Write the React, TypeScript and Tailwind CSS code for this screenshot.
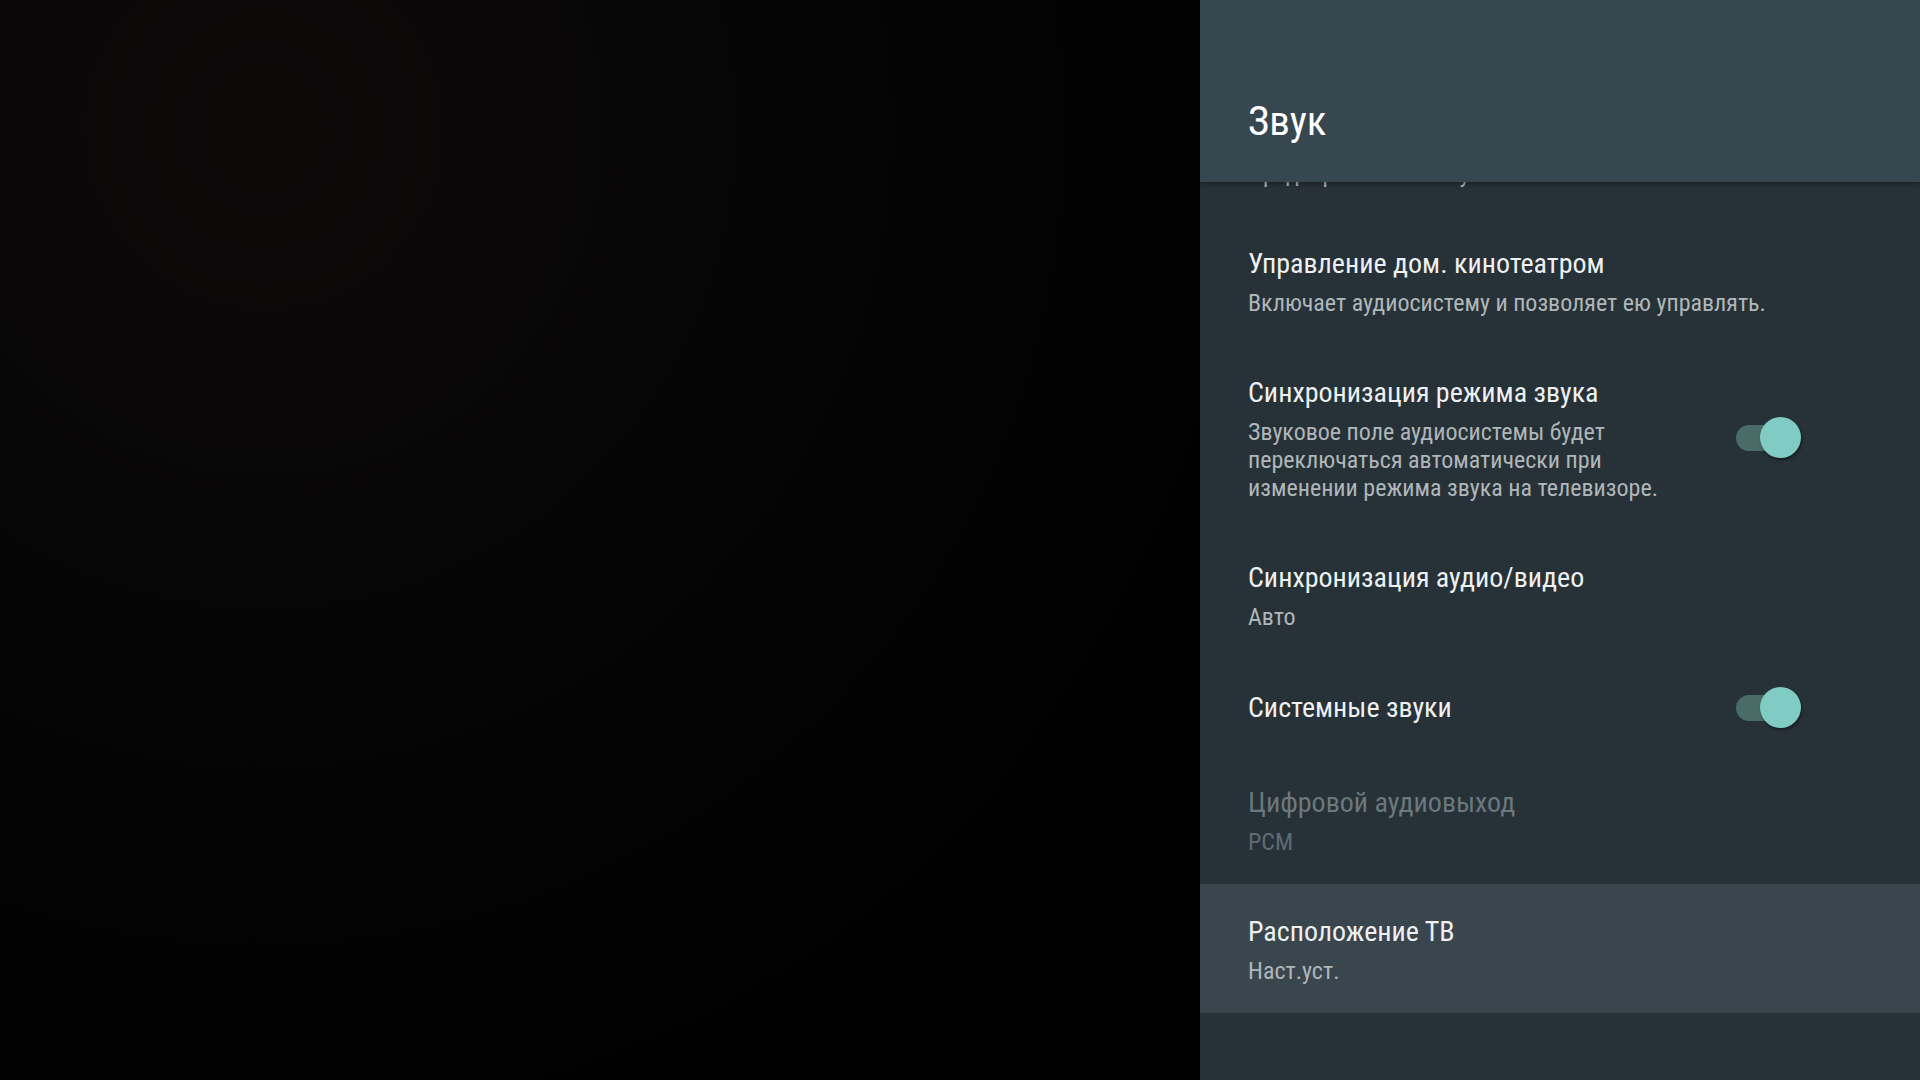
const font = { fontFamily: "Roboto, 'Noto Sans', sans-serif" };

type Row = {
  title: string;
  lines?: string[];
  toggle?: boolean;
  disabled?: boolean;
  focused?: boolean;
};

const rows: Row[] = [
  { title: "Звуковой режим", lines: ["Предварительный звук"] },
  { title: "Управление дом. кинотеатром", lines: ["Включает аудиосистему и позволяет ею управлять."] },
  {
    title: "Синхронизация режима звука",
    lines: [
      "Звуковое поле аудиосистемы будет",
      "переключаться автоматически при",
      "изменении режима звука на телевизоре.",
    ],
    toggle: true,
  },
  { title: "Синхронизация аудио/видео", lines: ["Авто"] },
  { title: "Системные звуки", toggle: true },
  { title: "Цифровой аудиовыход", lines: ["PCM"], disabled: true },
  { title: "Расположение ТВ", lines: ["Наст.уст."], focused: true },
];

function Toggle() {
  return (
    <div className="relative mr-[119px] h-[41px] w-[65px] shrink-0">
      <div className="absolute left-0 top-[8px] h-[26px] w-[54px] rounded-full bg-[#4a6c69]" />
      <div className="absolute right-0 top-0 h-[41px] w-[41px] rounded-full bg-[#80cbc4] shadow-[1px_2px_3px_rgba(0,0,0,0.45)]" />
    </div>
  );
}

function SettingRow({ row }: { row: Row }) {
  const titleColor = row.disabled ? "text-[#6b787e]" : "text-[#eef0f1]";
  const subColor = row.disabled ? "text-[#5f6c72]" : "text-[#b0b6b9]";
  return (
    <div
      className={`flex items-center pl-[48px] pt-[28px] ${row.lines ? "pb-[28px]" : "pb-[27px]"} ${row.focused ? "bg-[#3a464d]" : ""}`}
    >
      <div className="flex-1 font-stretch-condensed">
        <div className={`text-[28px] leading-[40px] ${titleColor}`}>{row.title}</div>
        {row.lines && (
          <div className={`mt-[5px] text-[24px] leading-[28px] ${subColor}`}>
            {row.lines.map((l) => (
              <div key={l}>{l}</div>
            ))}
          </div>
        )}
      </div>
      {row.toggle && <Toggle />}
    </div>
  );
}

export default function App() {
  return (
    <div className="flex h-[1080px] w-[1920px] overflow-hidden bg-black" style={font}>
      <div className="flex-1 bg-[radial-gradient(ellipse_at_22%_12%,#0c0a09_0%,#060505_40%,#010101_75%)]" />
      <div className="relative w-[720px] overflow-hidden bg-[#263238]">
        <div className="absolute inset-x-0 top-0 z-10 h-[182px] bg-[#37474f] pl-[48px] pt-[97px] shadow-[0_2px_5px_rgba(0,0,0,0.35)]">
          <h1 className="text-[41px] font-normal leading-[48px] text-white font-stretch-condensed">Звук</h1>
        </div>
        <div className="flex flex-col pt-[87px]">
          {rows.map((r) => (
            <SettingRow key={r.title} row={r} />
          ))}
        </div>
      </div>
    </div>
  );
}
